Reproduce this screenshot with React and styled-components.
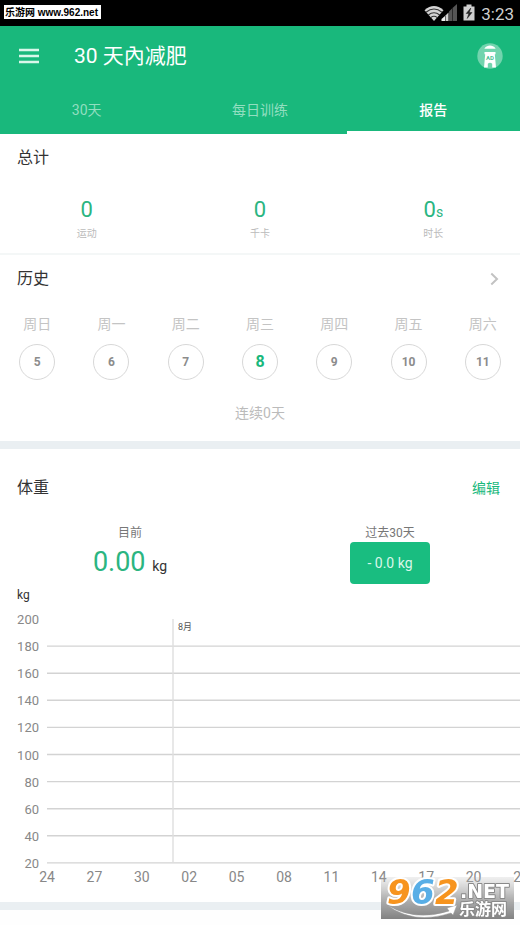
import { useState } from "react";
import styled, { createGlobalStyle } from "styled-components";

const TABS = ['30天', '每日训练', '报告'];

const TOTALS = [
    { label: '运动', value: '0' },
    { label: '千卡', value: '0' },
    { label: '时长', value: '0', unit: 's' },
];

const WEEK = [
    { name: '周日', day: 5 },
    { name: '周一', day: 6 },
    { name: '周二', day: 7 },
    { name: '周三', day: 8 },
    { name: '周四', day: 9 },
    { name: '周五', day: 10 },
    { name: '周六', day: 11 },
];

const TODAY = 8;

const KG_TICKS = [200, 180, 160, 140, 120, 100, 80, 60, 40, 20];
const DAY_TICKS = ['24', '27', '30', '02', '05', '08', '11', '14', '17', '20', '23'];

export default function App() {

    const [tab, setTab] = useState('报告');

    return (
        <>
            <GlobalStyle />
            <StatusBar>
                <SiteTag>乐游网 www.962.net</SiteTag>
                <StatusIcons />
            </StatusBar>

            <Header>
                <TitleRow>
                    <IconButton aria-label="菜单">
                        <svg width="20" height="16" viewBox="0 0 20 16">
                            <path d="M0 2h20M0 8h20M0 14h20" stroke="#d9f7ea" strokeWidth="2.4" />
                        </svg>
                    </IconButton>
                    <h1>30 天內减肥</h1>
                    <IconButton aria-label="广告">
                        <AdIcon />
                    </IconButton>
                </TitleRow>
                <Tabs>
                    {TABS.map((name) => (
                        <Tab key={name} $active={name === tab} onClick={() => setTab(name)}>{name}</Tab>
                    ))}
                </Tabs>
            </Header>

            <main>
                <Section>
                    <SectionHead><h2>总计</h2></SectionHead>
                    <Totals>
                        {TOTALS.map((total) => (
                            <Total key={total.label}>
                                <p>{total.value}{total.unit && <small>{total.unit}</small>}</p>
                                <span>{total.label}</span>
                            </Total>
                        ))}
                    </Totals>
                </Section>
                <Divider />

                <Section>
                    <SectionHead>
                        <h2>历史</h2>
                        <IconButton aria-label="查看历史">
                            <svg width="10" height="14" viewBox="0 0 10 14">
                                <path d="M1.300 1.500L7 7l-5.700 5.500" fill="none" stroke="#c2c2c2" strokeWidth="2" />
                            </svg>
                        </IconButton>
                    </SectionHead>
                    <Week>
                        {WEEK.map(({ name, day }) => (
                            <Day key={day}>
                                <span>{name}</span>
                                <DayCircle $today={day === TODAY}>{day}</DayCircle>
                            </Day>
                        ))}
                    </Week>
                    <Streak>连续0天</Streak>
                </Section>
                <Band />

                <Section>
                    <SectionHead $tall>
                        <h2>体重</h2>
                        <EditButton>编辑</EditButton>
                    </SectionHead>
                    <Weights>
                        <Weight>
                            <span>目前</span>
                            <Current>0.00 <small>kg</small></Current>
                        </Weight>
                        <Weight>
                            <span>过去30天</span>
                            <Change>- 0.0 kg</Change>
                        </Weight>
                    </Weights>
                    <ChartUnit>kg</ChartUnit>
                    <WeightChart />
                </Section>
                <Band />
            </main>

            <Watermark />
        </>
    )
}

function StatusIcons() {
    return (
        <StatusRight>
            <svg width="52" height="20" viewBox="0 0 52 20">
                <path d="M0.5 5.200Q10 -3 19.500 5.200L10 16z" fill="#d4d4d4" />
                <path d="M2 7.200Q10 0.800 18 7.200M4.300 10Q10 5.600 15.700 10M6.700 12.600Q10 10 13.300 12.600" fill="none" stroke="#333" strokeWidth="1.100" />
                <path d="M17.500 16v-2l3.500-3v5z" fill="#eee" />
                <path d="M21.500 16v-5.500l3-3V16z" fill="#d0d0d0" />
                <path d="M25 16V6.500l3-3V16zM28.500 16V3l4.500-4V16z" fill="#555" />
                <path d="M39.500 1.500h3v-2h5v2h3V15.500h-11z" fill="#cfcfcf" />
                <path d="M46.800 3l-4.600 5.500h2.600l-1.600 5 4.800-6h-2.700z" fill="#222" stroke="#222" strokeWidth=".5" />
            </svg>
            <Clock>3:23</Clock>
        </StatusRight>
    )
}

function AdIcon() {
    return (
        <svg width="26" height="26" viewBox="0 0 26 26">
            <circle cx="13" cy="13" r="12.7" fill="#72d4ae" />
            <path d="M7.300 5.800C9 3.200 11 2.600 13 2.600s4 .6 5.700 3.200z" fill="#fff" />
            <path d="M7.500 9h11v2.200h-.7l1.200 13.300h-3.800v-3.800q-2.200-2-4.400 0v3.800H7l1.200-13.300h-.7z" fill="#fff" />
            <text x="13" y="16.600" textAnchor="middle" fontSize="6" fontWeight="700" fill="#4cbf94">AD</text>
        </svg>
    )
}

function WeightChart() {
    const rowY = (i) => 10 + i * 27.1;
    const dayX = (i) => 47 + i * 47.4;

    return (
        <Chart role="img" aria-label="体重 kg">
            {KG_TICKS.map((kg, i) => (
                <g key={kg}>
                    <text x="39" y={rowY(i) + 5} textAnchor="end" fontSize="13">{kg}</text>
                    {i > 0 && <line x1="47" x2="100%" y1={rowY(i)} y2={rowY(i)} stroke="#d3d3d3" strokeWidth="1.4" />}
                </g>
            ))}
            <line x1="173" x2="173" y1="10" y2="254" stroke="#dedede" strokeWidth="1.4" />
            <text x="178" y="21" fontSize="9" fill="#555">8月</text>
            {DAY_TICKS.map((day, i) => (
                <text key={day} x={dayX(i)} y="273" textAnchor="middle" fontSize="14">{day}</text>
            ))}
        </Chart>
    )
}

function Watermark() {
    return (
        <WatermarkBox>
            <svg width="133" height="42" viewBox="0 0 133 42">
                <defs>
                    <linearGradient id="plate" x1="0" y1="0" x2="0" y2="1">
                        <stop offset="0" stopColor="#b4b4b4" stopOpacity="0.2" />
                        <stop offset="0.5" stopColor="#a0a0a0" stopOpacity="0.8" />
                        <stop offset="1" stopColor="#828282" />
                    </linearGradient>
                </defs>
                <rect width="133" height="42" fill="url(#plate)" />
                <path d="M6 28q28 17 62 6l-2-3 10-3-4 10-2-2Q32 48 6 28z" fill="#fff" stroke="#999" strokeWidth=".5" />
                <g fontFamily="'DejaVu Sans'" fontWeight="700" fontStyle="italic" fontSize="34" strokeWidth="2" strokeLinejoin="round">
                    <g fill="#fff" stroke="#fff" strokeWidth="4">
                        <text x="6" y="27" aria-hidden="true" fill="#f7941e" stroke="#fff" paintOrder="stroke">9</text>
                        <text x="30" y="27" fill="#58aee6" paintOrder="stroke">6</text>
                        <text x="54" y="27" fill="#f7941e" paintOrder="stroke">2</text>
                    </g>
                </g>
                <g fill="#fff" stroke="#8a8a8a" strokeWidth="2" paintOrder="stroke" strokeLinejoin="round" fontWeight="700">
                    <text x="79" y="21" fontFamily="'DejaVu Sans'" fontSize="19">.NET</text>
                    <text x="78" y="38" fontFamily="'Noto Sans CJK SC'" fontSize="16">乐游网</text>
                </g>
            </svg>
        </WatermarkBox>
    )
}

const GlobalStyle = createGlobalStyle`
    * {
        box-sizing: border-box;
    }
    body {
        margin: 0;
        background-color: #fefefe;
        font-family: Roboto, 'Noto Sans CJK SC', sans-serif;
        color: #333;
    }
    h1, h2, p {
        margin: 0;
        font-weight: 400;
    }
    button {
        font-family: inherit;
        border: none;
        padding: 0;
        background: none;
        cursor: pointer;
    }
`
const StatusBar = styled.div`
    display: flex;
    justify-content: space-between;
    align-items: flex-start;
    height: 26px;
    padding: 5px 6px 0 4px;
    background-color: #000;
`
const SiteTag = styled.span`
    height: 14px;
    padding: 0 3px 0 1px;
    background-color: #fff;
    color: #000;
    font-family: 'Liberation Sans', 'Noto Sans CJK SC', sans-serif;
    font-size: 10px;
    font-weight: 700;
    line-height: 15px;
    white-space: nowrap;
`
const StatusRight = styled.div`
    display: flex;
    gap: 5px;
    svg {
        overflow: visible;
    }
`
const Clock = styled.span`
    color: #cfcfcf;
    font-size: 17px;
    line-height: 18px;
`
const Header = styled.header`
    background-color: #19b87c;
    color: #fff;
`
const IconButton = styled.button`
    display: flex;
    align-items: center;
`
const TitleRow = styled.div`
    display: flex;
    align-items: center;
    height: 60px;
    padding: 0 17px 0 19px;
    h1 {
        flex: 1;
        margin-left: 35px;
        font-family: Roboto, 'Noto Sans CJK TC', sans-serif;
        font-size: 21px;
        line-height: 30px;
    }
`
const Tabs = styled.nav`
    display: flex;
    height: 48px;
`
const Tab = styled.button`
    flex: 1;
    padding-top: 2px;
    border-bottom: 3px solid ${(props) => props.$active ? '#fff' : 'transparent'};
    color: ${(props) => props.$active ? '#fff' : '#92dec0'};
    font-size: 14px;
    font-weight: ${(props) => props.$active ? 500 : 400};
    line-height: 20px;
`
const Section = styled.section`
    background-color: #fff;
`
const SectionHead = styled.div`
    display: flex;
    align-items: center;
    justify-content: space-between;
    height: ${(props) => props.$tall ? '75px' : '46px'};
    padding: 2px 20px 0 17px;
    h2 {
        font-size: 16px;
        line-height: 24px;
    }
`
const Totals = styled.div`
    display: flex;
    height: 73px;
    padding-top: 17px;
`
const Total = styled.div`
    flex: 1;
    text-align: center;
    p {
        height: 28px;
        color: #2bb581;
        font-size: 22px;
        line-height: 26px;
    }
    small {
        font-size: 14px;
    }
    span {
        display: block;
        color: #bbb;
        font-size: 10px;
        line-height: 18px;
    }
`
const Divider = styled.div`
    height: 2px;
    background-color: #f4f7f7;
`
const Week = styled.div`
    display: flex;
    padding-top: 13px;
`
const Day = styled.div`
    flex: 1;
    display: flex;
    flex-direction: column;
    align-items: center;
    gap: 10px;
    color: #c4c4c4;
    font-size: 14px;
    line-height: 20px;
`
const DayCircle = styled.div`
    display: flex;
    align-items: center;
    justify-content: center;
    width: 36px;
    height: 36px;
    border: 1px solid #d8d8d8;
    border-radius: 50%;
    color: ${(props) => props.$today ? '#19b87c' : '#8c8c8c'};
    font-size: ${(props) => props.$today ? '16px' : '12px'};
    font-weight: 700;
`
const Streak = styled.p`
    padding: 23px 0 18px;
    color: #bbb;
    font-size: 14px;
    line-height: 20px;
    text-align: center;
`
const Band = styled.div`
    height: 8px;
    background-color: #eaeff2;
`
const EditButton = styled.button`
    color: #19b87c;
    font-size: 14px;
    line-height: 20px;
`
const Weights = styled.div`
    display: flex;
    height: 62px;
`
const Weight = styled.div`
    flex: 1;
    display: flex;
    flex-direction: column;
    align-items: center;
    color: #777;
    font-size: 12px;
    line-height: 18px;
`
const Current = styled.p`
    color: #2bb581;
    font-size: 27px;
    line-height: 40px;
    small {
        color: #333;
        font-size: 14px;
    }
`
const Change = styled.button`
    width: 80px;
    height: 42px;
    border-radius: 4px;
    background-color: #19bd80;
    color: #d9f7ea;
    font-size: 14px;
`
const ChartUnit = styled.p`
    padding: 0 17px;
    font-size: 12px;
    line-height: 18px;
`
const Chart = styled.svg`
    display: block;
    width: 100%;
    height: 293px;
    margin-top: 5px;
    fill: #888;
`
const WatermarkBox = styled.div`
    position: fixed;
    right: 6px;
    bottom: 6px;
    svg {
        display: block;
        overflow: visible;
    }
`
